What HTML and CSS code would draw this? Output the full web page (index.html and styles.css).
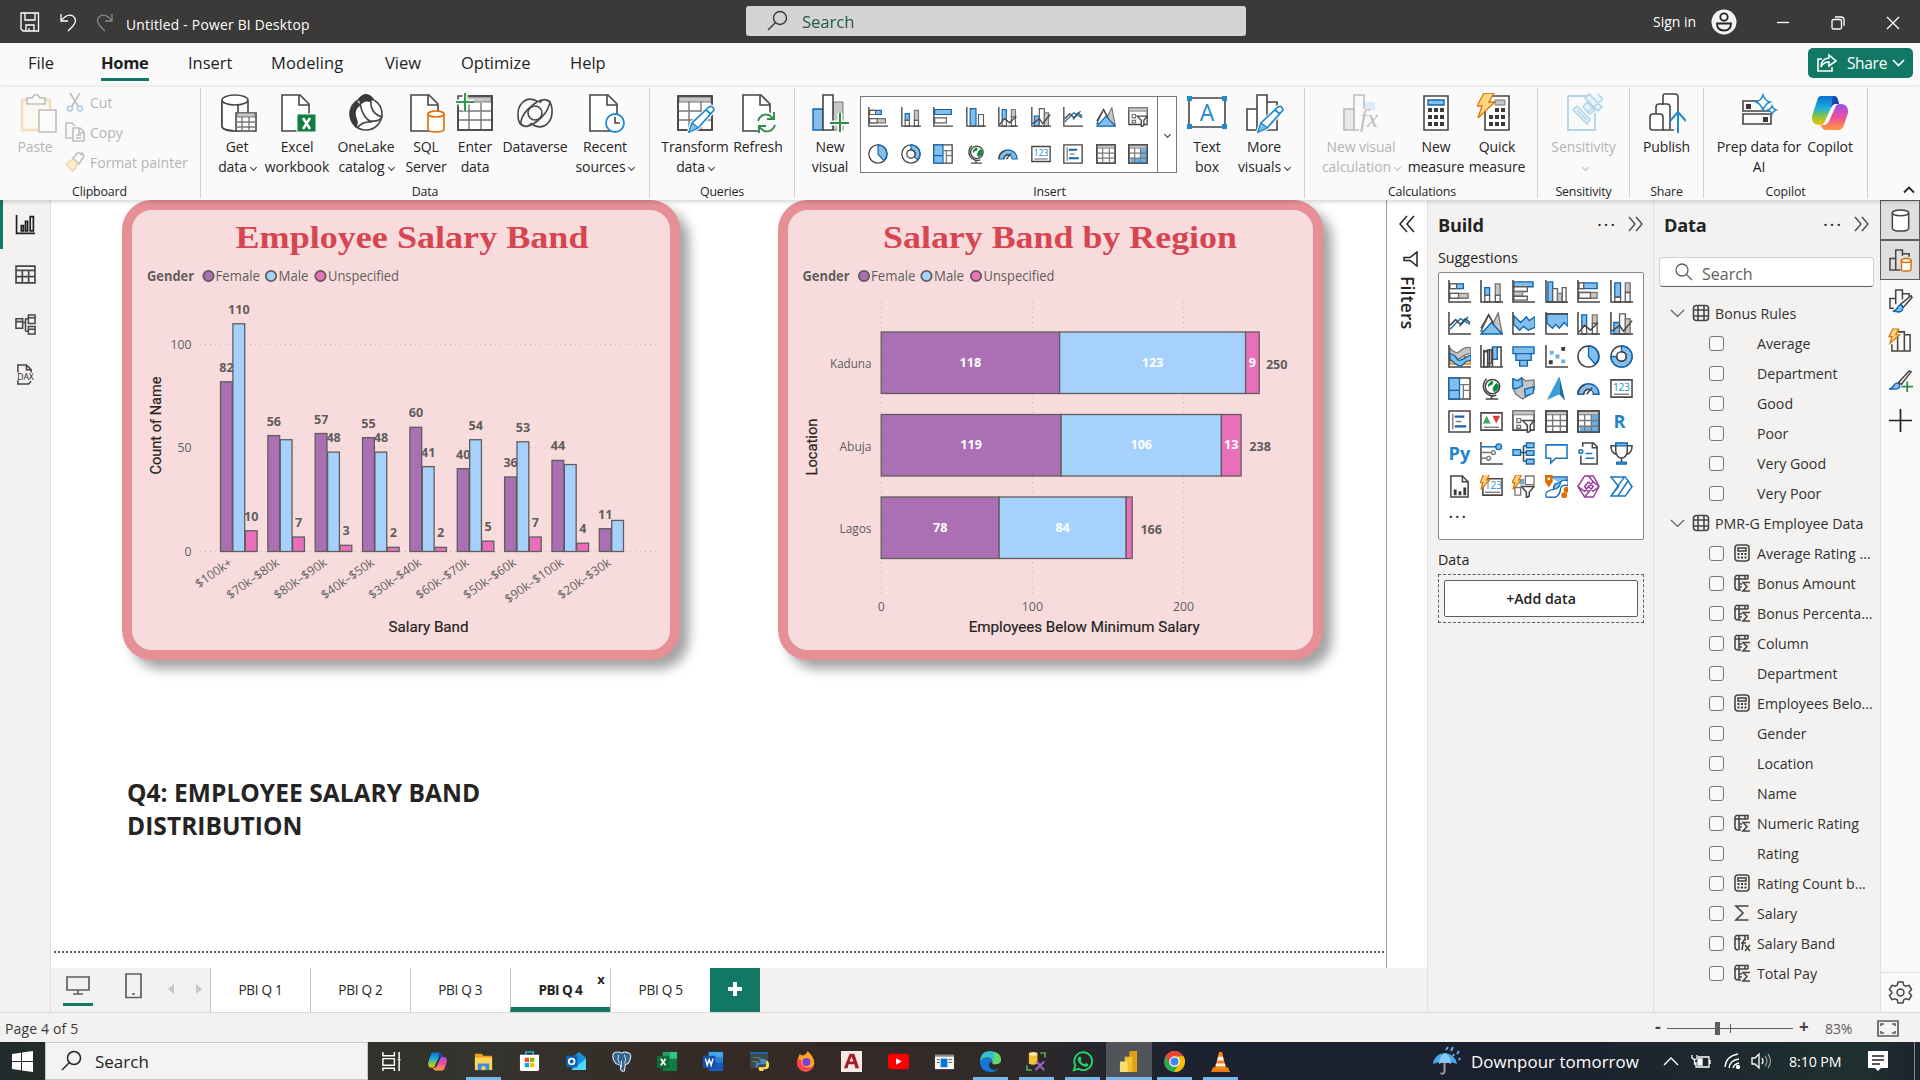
FILE: index.html
```html
<!DOCTYPE html>
<html lang="en">
<head>
<meta charset="utf-8">
<title>Untitled - Power BI Desktop</title>
<link rel="stylesheet" href="styles.css">
</head>
<body>
<svg class="sprite" width="0" height="0">
  <!-- visual types, 24 unit grid -->
  <symbol id="v-sbar" viewBox="0 0 24 24"><path class="u" d="M2 4h14v5H2z"/><path class="w" d="M2 4h7v5H2z"/><path class="g" d="M2 14h19v5H2z"/><path class="w" d="M2 14h9v5H2z"/><path class="k" d="M1 0v23h23"/></symbol>
  <symbol id="v-scol" viewBox="0 0 24 24"><path class="u" d="M5 8h5v8H5z"/><path class="w" d="M5 16h5v7H5z"/><path class="g" d="M16 4h5v12h-5z"/><path class="w" d="M16 16h5v7h-5z"/><path class="k" d="M1 0v23h23"/></symbol>
  <symbol id="v-cbar" viewBox="0 0 24 24"><path class="u" d="M2 2h20v5H2z"/><path class="w" d="M2 7h14v5H2z"/><path class="g" d="M2 12h9v5H2z"/><path class="w" d="M2 17h14v4H2z"/><path class="k" d="M1 0v23h23"/></symbol>
  <symbol id="v-cbar2" viewBox="0 0 24 24"><path class="u" d="M2 3h20v6H2z"/><path class="w" d="M2 13h14v6H2z"/><path class="k" d="M1 0v23h23"/></symbol>
  <symbol id="v-ccol2" viewBox="0 0 24 24"><path class="u" d="M5 2h7v21H5z"/><path class="w" d="M15 9h6v14h-6z"/><path class="k" d="M1 0v23h23"/></symbol>
  <symbol id="v-ccol" viewBox="0 0 24 24"><path class="u" d="M3 2h5v21H3z"/><path class="w" d="M8 9h5v14H8z"/><path class="g" d="M13 14h5v9h-5z"/><path class="w" d="M18 8h4v15h-4z"/><path class="k" d="M1 0v23h23"/></symbol>
  <symbol id="v-pbar" viewBox="0 0 24 24"><path class="u" d="M2 3h19v6H2z"/><path class="w" d="M2 3h5v6H2z"/><path class="g" d="M2 13h19v6H2z"/><path class="w" d="M2 13h12v6H2z"/><path class="k" d="M1 0v23h23"/></symbol>
  <symbol id="v-pcol" viewBox="0 0 24 24"><path class="u" d="M5 3h6v15H5z"/><path class="w" d="M5 18h6v5H5z"/><path class="g" d="M16 3h5v10h-5z"/><path class="w" d="M16 13h5v10h-5z"/><path class="k" d="M1 0v23h23"/></symbol>
  <symbol id="v-line" viewBox="0 0 24 24"><path class="bl" d="M2 18l11-11 10 6"/><path class="bl" d="M12 15l9-10"/><path class="k" d="M1 0v23h23M2 14l6-6 5 5 5-6 5 4"/></symbol>
  <symbol id="v-area" viewBox="0 0 24 24"><path class="g" d="M12 15l7-14 4 21z"/><path class="w" d="M1 20L9 3l9 17H1z"/><path class="u" d="M1 23l11-12 11 12z"/><path class="k" d="M1 17L9 3l5 9"/></symbol>
  <symbol id="v-sarea" viewBox="0 0 24 24"><path class="u" d="M2 4l7 7 6-6 3 4 6-4v11l-7 3-5-4-4 4-6-6z"/><path class="k" d="M1 0v23h23"/></symbol>
  <symbol id="v-parea" viewBox="0 0 24 24"><path class="u" d="M2 2h22v13l-4-4-5 6-4-4-3 4-6-5z"/><path class="k" d="M1 0v23h23M1 2h23"/></symbol>
  <symbol id="v-lscol" viewBox="0 0 24 24"><path class="u" d="M5 3h5v12H5z"/><path class="w" d="M5 15h5v8H5z"/><path class="g" d="M16 3h5v9h-5z"/><path class="w" d="M16 12h5v11h-5z"/><path class="k" d="M1 0v23h23M2 21l6-7 6 5 8-8"/></symbol>
  <symbol id="v-lccol" viewBox="0 0 24 24"><path class="u" d="M4 11h6v12H4z"/><path class="w" d="M10 2h6v21h-6z"/><path class="g" d="M16 7h5v16h-5z"/><path class="k" d="M1 0v23h23M2 20l8-6 4 6 9-11"/></symbol>
  <symbol id="v-ribbon" viewBox="0 0 24 24"><path class="g" d="M2 3q6 8 11 3t11-3v6q-6 0-10 4t-12-4z"/><path class="o" d="M2 12h6v8H2zM17 12h6v8h-6z"/><path class="u" d="M2 9q5 1 7 5t8 0 7-3v5q-5 0-8 4t-9-1-5-4z"/><path class="k" d="M1 0v23h23"/></symbol>
  <symbol id="v-fall" viewBox="0 0 24 24"><path class="w" d="M4 7h4v16H4zM8 5h4v14H8z"/><path class="u" d="M13 2h5v13h-5z"/><path class="k" d="M1 0v23h23M4 23V6h4v17M10 5v18M13 3v20M18 2h4v21"/></symbol>
  <symbol id="v-funnel" viewBox="0 0 24 24"><path class="u" d="M1 2h22v7H1zM4 9h16v7H4zM8 16h8v6H8z"/></symbol>
  <symbol id="v-scatter" viewBox="0 0 24 24"><path class="uf" d="M5 6h4v4H5zM11 10h4v4h-4zM17 15h4v4h-4z"/><path class="kf" d="M17 2h4v4h-4zM4 16h4v4H4z"/><path class="k" d="M1 0v23h23"/></symbol>
  <symbol id="v-pie" viewBox="0 0 24 24"><circle class="kw" cx="12" cy="12" r="11"/><path class="u" d="M12 1a11 11 0 0 1 7 19l-7-8z"/></symbol>
  <symbol id="v-donut" viewBox="0 0 24 24"><circle class="kw" cx="12" cy="12" r="11"/><path class="u" fill-rule="evenodd" d="M12 1a11 11 0 1 1-11 11h6a5 5 0 1 0 5-5z"/><circle class="k" cx="12" cy="12" r="5"/></symbol>
  <symbol id="v-donut2" viewBox="0 0 24 24"><circle class="kw" cx="12" cy="12" r="11"/><path class="u" d="M12 1a11 11 0 0 1 8 18l-4-4a5 5 0 0 0-4-8z"/><circle class="k" cx="12" cy="12" r="5"/></symbol>
  <symbol id="v-tree" viewBox="0 0 24 24"><path class="kw" d="M1 1h22v22H1z"/><path class="u" d="M1 1h11v13H1zM1 14h11v9H1z"/><path class="gl" d="M12 8h11M16 8v15M16 14h7"/></symbol>
  <symbol id="v-globe" viewBox="0 0 24 24"><circle class="kw" cx="13" cy="10" r="7.500"/><path d="M8 8l4-4 2 1-1 3-3 1-1 2zM14 10l3-4 3 3-1 4-4 3-2-3z" fill="#10893e"/><path class="k" d="M7 2a10 10 0 0 0 10 17M12 19v4M6 23h13"/></symbol>
  <symbol id="v-map" viewBox="0 0 24 24"><path class="g" d="M1 2l5 2 4-3 4 3 9-1v10l-4 5-8 5-7-5-3-7z"/><path class="u" d="M1 2l5 2 4-3 1 8-6 3H1zM13 13l10-3-1 7-8 3z"/></symbol>
  <symbol id="v-azure" viewBox="0 0 24 24"><path d="M15-1L2 24l13-6z" fill="#35a0d8"/><path d="M15-1l6 26-6-7z" fill="#1d6f9f"/></symbol>
  <symbol id="v-gauge" viewBox="0 0 24 24"><path class="u" d="M1 18a11 11 0 0 1 22 0h-6a5 5 0 0 0-10 0z"/><path class="k" d="M10 18l6-7M1 18a11 11 0 0 1 7-10M7 18a5 5 0 0 1 6-5"/></symbol>
  <symbol id="v-card" viewBox="0 0 24 24"><path class="kw" d="M1 3h22v18H1z"/><path class="gl" d="M4 18h16"/></symbol>
  <symbol id="v-multi" viewBox="0 0 24 24"><path class="kw" d="M1 1h22v22H1z"/><path class="gl" d="M5 4v16"/><path class="bl2" d="M7 7h10M7 17h12"/><path class="gl" d="M8 12h6"/></symbol>
  <symbol id="v-kpi" viewBox="0 0 24 24"><path class="kw" d="M1 3h22v18H1z"/><path d="M3 14l4-8 4 8z" fill="#3da45c"/><path d="M13 6h8l-4 8z" fill="#e03a3a"/><path class="gl" d="M4 18h16"/></symbol>
  <symbol id="v-slicer" viewBox="0 0 24 24"><path class="kw" d="M1 1h22v20H1z"/><path class="gf" d="M1 1h22v4H1z"/><path class="gl" d="M5 9h4v4H5zM5 16h4v3H5z"/><path class="kw" d="M11 11h12l-4 5v6l-3 2v-8z"/></symbol>
  <symbol id="v-table" viewBox="0 0 24 24"><path class="kw" d="M1 1h22v22H1z"/><path class="gf" d="M1 1h22v4H1z"/><path class="gl" d="M2 11h20M2 17h20M8 5v17M16 5v17"/><path class="k" d="M1 1h22v22H1z"/></symbol>
  <symbol id="v-matrix" viewBox="0 0 24 24"><path class="kw" d="M1 1h22v22H1z"/><path class="gf" d="M1 1h22v4H1z"/><path class="uf" d="M15 5h8v18H3v-6h12z"/><path class="gl" d="M2 11h20M2 17h20M8 5v17M15 5v17"/><path class="k" d="M1 1h22v22H1z"/></symbol>
  <symbol id="v-infl" viewBox="0 0 24 24"><path class="k" d="M1 0v23h23"/><path class="bl" d="M2 5h16"/><circle class="u" cx="19.500" cy="5" r="3"/><path class="gl" d="M2 11h10M2 17h5"/><circle class="gl" cx="14" cy="11" r="2"/><circle class="gl" cx="9" cy="17" r="2"/></symbol>
  <symbol id="v-decomp" viewBox="0 0 24 24"><path class="k" d="M9 11h6M12 4v16M12 4h3M12 20h3"/><path class="u" d="M1 8h8v6H1zM15 1h8v5h-8zM15 9h8v5h-8zM15 18h8v5h-8z"/></symbol>
  <symbol id="v-qa" viewBox="0 0 24 24"><path class="bl" d="M1 3h22v14H11l-5 5v-5H1z"/></symbol>
  <symbol id="v-narr" viewBox="0 0 24 24"><path class="k" d="M6 5V1h11l4 4v18H4v-9M16 1v5h5"/><circle class="bl" cx="4" cy="10" r="2"/><path class="bl" d="M9 12h7M9 17h9"/></symbol>
  <symbol id="v-goal" viewBox="0 0 24 24"><path class="kw" d="M6 2h12v8q-1 6-6 7-5-1-6-7zM6 4H1q0 8 6 9M18 4h5q0 8-6 9M12 17v4"/><path class="u" d="M6 1h12v3H6zM7 21h10v2H7z"/></symbol>
  <symbol id="v-pag" viewBox="0 0 24 24"><path class="kw" d="M3 1h12l6 6v16H3z"/><path class="k" d="M15 1v6h6"/><path class="kf" d="M6 15h3v6H6zM11 17h3v4h-3zM16 13h3v8h-3z"/></symbol>
  <symbol id="v-newcard" viewBox="0 0 24 24"><path class="kw" d="M3 4h20v17H3z"/><path class="gl" d="M5 18h16"/></symbol>
  <symbol id="v-bolt" viewBox="0 0 24 24"><path class="o" d="M4-1h6L7 5h3L1 15l2-7H0z"/></symbol>
  <symbol id="v-newslice" viewBox="0 0 24 24"><path class="gl" d="M14 1h9v9h-9zM3 13h6v8H3z"/><path class="uf" d="M8 4h5v6H8z"/><path class="kw" d="M10 12h13l-5 6v4l-3 2v-6z"/><path class="o" d="M4 0h6L7 5h3L1 15l2-7H0z"/></symbol>
  <symbol id="v-arc" viewBox="0 0 24 24"><path class="u" d="M4 2h19v9q-7-1-7 4t-5 8H2v-5q7 2 7-4t7-6"/><path d="M1 23h10q4-2 5-8t8-4V6q-7-2-8 3t-7 6-8 4z" fill="#fff" stroke="#0f66b0" stroke-width="1.200"/><path d="M0 0h8v7l-4 6-4-6zM24 13a3 3 0 1 0 0 5z" fill="#e06c00"/><circle cx="4" cy="4" r="1.500" fill="#fff"/><circle cx="20" cy="21" r="3" fill="#e06c00"/></symbol>
  <symbol id="v-apps" viewBox="0 0 24 24"><path d="M8 1h4l5 6-5 5-4 5-7-5zM12 1h5l6 11-6 11H8l4-5 5-6-5-5M1 12l7 11 4-5-4-6 4-5M17 7l6 5-6 5-5-5" fill="none" stroke="#9b3a9b" stroke-width="1.500" stroke-linejoin="round"/></symbol>
  <symbol id="v-auto" viewBox="0 0 24 24"><path class="bl" d="M1 2h15l7 10-7 10H1l8-10zM1 22l14-20M8 22L19 6"/></symbol>
  <!-- ribbon, 40 unit grid -->
  <symbol id="r-getdata" viewBox="0 0 40 40"><path class="kw" d="M5 8v25q0 5 13 5h3V8"/><path class="kw" d="M5 8v25q0 4 11 4.500M31 8v14"/><ellipse class="kw" cx="18" cy="7" rx="13" ry="5"/><path class="kw" d="M19 20h20v18H19z"/><path class="gf" d="M20 20h18v4H20z"/><path class="gl" d="M19 29h20M19 34h20M25 24v14M32 24v14"/></symbol>
  <symbol id="r-page" viewBox="0 0 40 40"><path class="kw" d="M5 2h18l9 9v27H5z"/><path class="k" d="M22 2v10h10"/></symbol>
  <symbol id="r-excel" viewBox="0 0 40 40"><use href="#r-page"/><path d="M20 21h19v18H20z" fill="#107c41" stroke="#fafafa"/><path d="M26 25l7 11M33 25l-7 11" stroke="#fff" stroke-width="2.500"/></symbol>
  <symbol id="r-lake" viewBox="0 0 40 40"><circle class="kw" cx="20" cy="21" r="16"/><path class="kf" d="M12 6q8-10 16 0l-4 3q-6-2-9 3zM11 8q-14 13-1 27 3-4 1-9-4-9 4-14z"/><path class="k" d="M14 11q3 15 12 18-9-1-15 6M25 8q-1 12 11 16-3 5-11 4"/></symbol>
  <symbol id="r-sql" viewBox="0 0 40 40"><use href="#r-page"/><path d="M22 21v15q0 3 8 3t8-3V21z" fill="#fff" stroke="#e06c00" stroke-width="1.600"/><ellipse cx="30" cy="21" rx="8" ry="3" fill="#fff" stroke="#e06c00" stroke-width="1.600"/></symbol>
  <symbol id="r-enter" viewBox="0 0 40 40"><path class="kw" d="M3 3h34v34H3z"/><path class="gf" d="M11 4h25v5H11z"/><path class="gl" d="M3 18h34M3 27h34M14 10v27M26 10v27"/><path class="k" d="M3 14v23h34V3H14"/><path d="M2 9h17M10 0v18" stroke="#fafafa" stroke-width="5"/><path d="M1 9h18M10 0v18" stroke="#2e9e48" stroke-width="2"/></symbol>
  <symbol id="r-dv" viewBox="0 0 40 40"><path class="k" d="M22 8C10 2 2 12 3 24s10 10 15 7 13-10 15-16 4-6-1-8-7 3-7 3M18 32c12 6 20-4 19-16S27 6 22 9 9 19 7 25s-2 6 2 8 7-2 8-3"/><circle class="k" cx="20" cy="20" r="7"/></symbol>
  <symbol id="r-recent" viewBox="0 0 40 40"><use href="#r-page"/><circle cx="30" cy="30" r="9" fill="#fff" stroke="#1e8bcd" stroke-width="1.800"/><path class="k" d="M30 24v6h5"/></symbol>
  <symbol id="r-transform" viewBox="0 0 40 40"><path class="kw" d="M3 3h34v34H3z"/><path class="gf" d="M4 4h32v5H4z"/><path class="gl" d="M3 18h34M3 27h34M14 8v29M26 8v29"/><path class="k" d="M3 3h34v34H3z"/><use href="#r-pencil"/></symbol>
  <symbol id="r-pencil" viewBox="0 0 40 40"><path d="M14 39l3-9 17-16q4-2 5 3L23 35z" fill="#fff" stroke="#fafafa" stroke-width="4"/><path d="M14 39l3-9 17-16q4-2 5 3L23 35zM17 30l6 5M31 17l5 4" fill="#fff" stroke="#1e8bcd" stroke-width="1.700"/><path d="M14 39l3-9 6 5z" fill="#83beec" stroke="#1e8bcd"/></symbol>
  <symbol id="r-refresh" viewBox="0 0 40 40"><use href="#r-page"/><circle cx="28" cy="30" r="11" fill="#fafafa"/><path d="M20 28q3-8 11-6l5 4M36 19v7h-7M37 32q-3 8-11 6l-5-4M21 40v-7h7" fill="none" stroke="#2e8b48" stroke-width="1.900"/></symbol>
  <symbol id="r-newvis" viewBox="0 0 40 40"><path class="gf" d="M23 9h10v28H23z"/><path class="u" d="M3 16h10v21H3z"/><path class="kw" d="M13 2h10v35H13z"/><path d="M20 30h19M30 20v19" stroke="#fafafa" stroke-width="5"/><path d="M20 30h19M30 20v19" stroke="#2e8b48" stroke-width="2"/></symbol>
  <symbol id="r-text" viewBox="0 0 40 40"><path class="kw" d="M2 5h36v29H2z"/><path d="M0 3h5v5H0zM35 3h5v5h-5zM0 31h5v5H0zM35 31h5v5h-5z" fill="#1e8bcd"/></symbol>
  <symbol id="r-more" viewBox="0 0 40 40"><path class="kw" d="M3 16h10v21H3zM13 2h10v35H13zM23 9h10v28H23z"/><use href="#r-pencil"/></symbol>
  <symbol id="r-calc" viewBox="0 0 40 40"><path class="gf" d="M3 16h10v21H3z"/><path class="k" d="M3 16h10v21H3zM13 37V2h10v14M13 37h5"/><path d="M24 9h10v8H24z" fill="#9ccbf0"/></symbol>
  <symbol id="r-measure" viewBox="0 0 40 40"><path class="kw" stroke-width="2" d="M8 3h24v34H8z"/><path class="u" d="M12 7h16v5H12z"/><path class="kf" d="M12 15h4v4h-4zM18 15h4v4h-4zM24 15h4v4h-4zM12 22h4v4h-4zM18 22h4v4h-4zM24 22h4v4h-4zM12 29h4v4h-4zM18 29h4v4h-4zM24 29h4v4h-4z"/></symbol>
  <symbol id="r-quick" viewBox="0 0 40 40"><path class="kw" d="M8 3h24v34H8z"/><path class="gf" d="M18 7h10v5H18z"/><path class="kf" d="M12 22h4v4h-4zM18 15h4v4h-4zM24 15h4v4h-4zM18 22h4v4h-4zM24 22h4v4h-4zM12 29h4v4h-4zM18 29h4v4h-4zM24 29h4v4h-4z"/><path class="o" d="M7 0h10l-5 9h6L1 25l4-12H0z"/></symbol>
  <symbol id="r-sens" viewBox="0 0 40 40"><path d="M5 3h22M32 20v17H5V3" fill="none" stroke="#1e8bcd" stroke-width="1.800"/><path d="M10 17l4-4 13 13-3 5zM14 17l10 10M22 5l4-4 13 13-4 4zM20 14l4-5 8 8-5 4zM35 1l5 5-16 14" fill="#c5e3f7" stroke="#1e8bcd" stroke-width="1.500"/></symbol>
  <symbol id="r-publish" viewBox="0 0 40 40"><path class="kw" d="M17 12V3q0-2 2-2h10q3 0 3 3v12M10 21v-7q0-3 3-3h8q3 0 3 3v22M4 36V24q0-3 3-3h7q3 0 3 3v13H6q-2 0-2-3"/><path class="k" d="M17 37h11M32 16v5"/><path d="M32 40V19M24 28l8-9 8 9" fill="none" stroke="#1e8bcd" stroke-width="2"/></symbol>
  <symbol id="r-prep" viewBox="0 0 40 40"><path class="k" d="M19 8H4v10h28M4 21h28v10H4z"/><path class="kf" d="M7 11h5v5H7zM24 24h5v5h-5z"/><path d="M24 2q2 6 7 7-5 2-7 8-2-6-7-8 5-1 7-7zM33 13q1 3 4 4-3 1-4 4-1-3-4-4 3-1 4-4z" fill="#fff" stroke="#1e8bcd" stroke-width="1.500"/></symbol>
  <linearGradient id="cg1" x1="0" y1="0" x2="0" y2="1"><stop offset="0" stop-color="#0a6fd6"/><stop offset=".45" stop-color="#22b1d8"/><stop offset=".7" stop-color="#8bc43f"/><stop offset="1" stop-color="#f4c000"/></linearGradient>
  <linearGradient id="cg2" x1="0" y1="0" x2="0" y2="1"><stop offset="0" stop-color="#9a4df0"/><stop offset=".5" stop-color="#ea4f9d"/><stop offset="1" stop-color="#ff9a3c"/></linearGradient>
  <symbol id="r-copilot" viewBox="0 0 40 40"><path d="M11 3h13q3 0 4 4l1 4h-4q-3 0-5 6l-5 11q-1 4-5 4-9 0-8-9L7 8q1-5 4-5z" fill="url(#cg1)"/><path d="M29 37H16q-4 0-5-5h4q3-1 5-6l5-11q1-4 5-4 9 0 8 9l-4 12q-2 5-5 5z" fill="url(#cg2)"/><path d="M23 3q4 0 5 4l1 4h-4q-2 0-4 4z" fill="#1847b5"/></symbol>
  <symbol id="r-paste" viewBox="0 0 40 40"><path d="M4 7h28v30H4z" fill="#fff4dd" stroke="#e8a33d" stroke-width="2.500"/><path class="kw" d="M9 11V5h5q4-7 8 0h5v6z"/><path class="kw" stroke-width="2" d="M21 17h17v22H21z"/></symbol>
  <symbol id="s-cut" viewBox="0 0 20 20"><path class="k" d="M5 1l8 13M15 1L7 14"/><circle class="bl" cx="5" cy="16.500" r="2.500"/><circle class="bl" cx="15" cy="16.500" r="2.500"/></symbol>
  <symbol id="s-copy" viewBox="0 0 20 20"><path class="k" d="M7 16H1V1h6l3 3"/><path class="kw" d="M8 6h7l4 4v9H8zM14 6v5h5M11 13h5M11 16h5"/></symbol>
  <symbol id="s-brush" viewBox="0 0 20 20"><path class="kw" d="M8 6l6 6 5-8-2-3-2 1-2-2-3 4z"/><path class="o" d="M8 7L1 12l7 7 5-7z"/></symbol>
  <!-- field list -->
  <symbol id="f-table" viewBox="0 0 18 18"><rect class="k" x="1.500" y="1.500" width="15" height="15" rx="3"/><path class="k" d="M6 2v14M12 2v14M2 6h14M2 12h14"/></symbol>
  <symbol id="f-calc" viewBox="0 0 18 18"><rect class="k" x="2" y="1" width="14" height="16" rx="3"/><rect class="k" x="5" y="4" width="8" height="3"/><path class="kf" d="M4.500 9h2v2h-2zM8 9h2v2H8zM11.500 9h2v2h-2zM4.500 12.500h2v2h-2zM8 12.500h2v2H8zM11.500 12.500h2v2h-2z"/></symbol>
  <symbol id="f-colsum" viewBox="0 0 18 18"><path class="k" d="M15 5V1.500H3.500Q2 2 2 4v9q0 3 3 3h3M6 2v14M12 2v3M2 5h13M6 10h3M6 13h3M17 8.500h-7l4 4-4 4.500h7"/></symbol>
  <symbol id="f-sum" viewBox="0 0 18 18"><path class="k" d="M15.500 2H3l7 7-7 7h12.500"/></symbol>
  <symbol id="f-fx" viewBox="0 0 18 18"><path class="k" d="M15 6V1.500H3.500Q2 2 2 4v9q0 3 3 3M6 2v14M12 2v3M2 5h6M13 6q-3-1-3 4l-1 6M8 9h5M12 11l5 6M17 11l-5 6"/></symbol>
</svg>

<header class="titlebar">
  <svg class="qa" viewBox="0 0 20 20"><path d="M1 1h17.500v18H3l-2-2zM5 1v7h10V1M6 19v-6h8v6M9 16v3"/></svg>
  <svg class="qa undo" viewBox="0 0 18 20"><path d="M2 2v7h7M2 9q6-8 12-5 5 4 0 10l-5 5"/></svg>
  <svg class="qa redo" viewBox="0 0 18 20"><path d="M16 2v7H9M16 9q-6-8-12-5-5 4 0 10l5 5"/></svg>
  <span class="wintitle">Untitled - Power BI Desktop</span>
  <div class="topsearch"><svg width="22" height="22" viewBox="0 0 22 22"><circle cx="14" cy="8" r="6.500"/><path d="M9.500 12.500L2 20"/></svg>Search</div>
  <span class="signin">Sign in</span>
  <svg class="avatar" viewBox="0 0 26 26"><circle cx="13" cy="13" r="12.500" fill="#f3f2f1"/><g fill="none" stroke="#252423" stroke-width="1.800"><circle cx="13" cy="8" r="3.700"/><path d="M6 14.500h14q0 7-7 7t-7-7z"/></g></svg>
  <svg class="win" width="14" height="14" viewBox="0 0 14 14"><path d="M1 6.500h12"/></svg>
  <svg class="win" width="14" height="14" viewBox="0 0 14 14"><rect x="1" y="3.500" width="9.500" height="9.500" rx="1.500"/><path d="M4 1h6q3 0 3 3v6"/></svg>
  <svg class="win" width="14" height="14" viewBox="0 0 14 14"><path d="M1 1l12 12M13 1L1 13"/></svg>
</header>

<nav class="menu">
  <span class="m1">File</span><b class="m2">Home</b><span class="m3">Insert</span><span class="m4">Modeling</span><span class="m5">View</span><span class="m6">Optimize</span><span class="m7">Help</span>
  <button class="share"><svg width="22" height="20" viewBox="0 0 22 20"><path d="M6 6H2v12h14v-4M13 2l7 6-7 5v-4q-6 0-8 5 0-8 8-9z"/></svg>Share<svg width="13" height="8" viewBox="0 0 13 8"><path d="M1 1l5.500 5.500L12 1"/></svg></button>
</nav>

<section class="ribbon">
  <div class="group g-clip"><div class="tools">
    <div class="rb w-paste off"><svg><use href="#r-paste"/></svg><span>Paste</span></div>
    <div class="small off"><div><svg><use href="#s-cut"/></svg>Cut</div><div><svg><use href="#s-copy"/></svg>Copy</div><div><svg><use href="#s-brush"/></svg>Format painter</div></div>
  </div><footer>Clipboard</footer></div>
  <div class="group g-data"><div class="tools">
    <div class="rb w66"><svg><use href="#r-getdata"/></svg><span>Get</span><span>data<i></i></span></div>
    <div class="rb w54"><svg><use href="#r-excel"/></svg><span>Excel</span><span>workbook</span></div>
    <div class="rb w84"><svg><use href="#r-lake"/></svg><span>OneLake</span><span>catalog<i></i></span></div>
    <div class="rb w36"><svg><use href="#r-sql"/></svg><span>SQL</span><span>Server</span></div>
    <div class="rb w62"><svg><use href="#r-enter"/></svg><span>Enter</span><span>data</span></div>
    <div class="rb w58"><svg><use href="#r-dv"/></svg><span>Dataverse</span></div>
    <div class="rb w82"><svg><use href="#r-recent"/></svg><span>Recent</span><span>sources<i></i></span></div>
  </div><footer>Data</footer></div>
  <div class="group g-query"><div class="tools">
    <div class="rb w66"><svg><use href="#r-transform"/></svg><span>Transform</span><span>data<i></i></span></div>
    <div class="rb w60"><svg><use href="#r-refresh"/></svg><span>Refresh</span></div>
  </div><footer>Queries</footer></div>
  <div class="group g-insert"><div class="tools">
    <div class="rb w59"><svg><use href="#r-newvis"/></svg><span>New</span><span>visual</span></div>
    <div class="gallery"><div class="gal-grid">
      <svg><use href="#v-sbar"/></svg><svg><use href="#v-scol"/></svg><svg><use href="#v-cbar2"/></svg><svg><use href="#v-ccol2"/></svg><svg><use href="#v-lscol"/></svg><svg><use href="#v-lccol"/></svg><svg><use href="#v-line"/></svg><svg><use href="#v-area"/></svg><svg><use href="#v-slicer"/></svg>
      <svg><use href="#v-pie"/></svg><svg><use href="#v-donut2"/></svg><svg><use href="#v-tree"/></svg><svg><use href="#v-globe"/></svg><svg><use href="#v-gauge"/></svg><svg viewBox="0 0 24 24"><use href="#v-card"/><text x="12" y="14.500" class="t123">123</text></svg><svg><use href="#v-multi"/></svg><svg><use href="#v-table"/></svg><svg><use href="#v-matrix"/></svg>
    </div><div class="gal-more"><i></i></div></div>
    <div class="rb w60"><svg viewBox="0 0 40 40"><use href="#r-text"/><text x="20" y="28" class="ta">A</text></svg><span>Text</span><span>box</span></div>
    <div class="rb w54"><svg><use href="#r-more"/></svg><span>More</span><span>visuals<i></i></span></div>
  </div><footer>Insert</footer></div>
  <div class="group g-calc"><div class="tools">
    <div class="rb w108 off"><svg viewBox="0 0 40 40"><use href="#r-calc"/><text x="28" y="34" class="tfx">fx</text></svg><span>New visual</span><span>calculation<i></i></span></div>
    <div class="rb w42"><svg><use href="#r-measure"/></svg><span>New</span><span>measure</span></div>
    <div class="rb w80"><svg><use href="#r-quick"/></svg><span>Quick</span><span>measure</span></div>
  </div><footer>Calculations</footer></div>
  <div class="group g-sens"><div class="tools mid"><div class="rb off"><svg><use href="#r-sens"/></svg><span>Sensitivity</span><span><i></i></span></div></div><footer>Sensitivity</footer></div>
  <div class="group g-share"><div class="tools mid"><div class="rb"><svg><use href="#r-publish"/></svg><span>Publish</span></div></div><footer>Share</footer></div>
  <div class="group g-cop"><div class="tools">
    <div class="rb w110"><svg><use href="#r-prep"/></svg><span>Prep data for</span><span>AI</span></div>
    <div class="rb w32"><svg><use href="#r-copilot"/></svg><span>Copilot</span></div>
  </div><footer>Copilot</footer></div>
  <svg class="collapse" width="12" height="8" viewBox="0 0 12 8"><path d="M1 6.500L6 1.500l5 5"/></svg>
</section>

<main class="work">
  <aside class="leftrail">
    <div class="on"><svg viewBox="0 0 20 20"><path class="k2" d="M1.500 1v17.500H19M6 16v-5h2v5zM10 16V7h2v9zM14.500 16V2.500h3V16z"/></svg></div>
    <div><svg viewBox="0 0 20 20"><path class="k" d="M1 2h18v16H1zM1 6h18M1 12h18M7 6v12M13 6v12"/></svg></div>
    <div><svg viewBox="0 0 22 22"><path class="k" d="M1 5h7v10H1zM1 8h7M14 1h7v9h-7zM14 4h7M14 13h7v8h-7zM14 16h7M8 9h3M11 5v13M11 5h3M11 18h3"/></svg></div>
    <div><svg viewBox="0 0 22 22"><path class="k" d="M3 9V1h9l5 5v3M12 1v5h5M3 17v4h11l3-3"/><text x="11" y="16.500" class="tdax">DAX</text></svg></div>
  </aside>
  <div class="center">
    <div class="stage">
      <div class="canvas">
        <div class="cards">
          <article class="card c1"><svg id="bands"></svg></article>
          <article class="card c2"><svg id="regions"></svg></article>
        </div>
        <h1>Q4: EMPLOYEE SALARY BAND<br>DISTRIBUTION</h1>
        <div class="dots"></div>
      </div>
      <div class="filters">
        <svg width="18" height="18" viewBox="0 0 18 18"><path d="M9 1L2 9l7 8M16 1L9 9l7 8"/></svg>
        <svg width="16" height="16" viewBox="0 0 16 16"><path d="M15 1v14l-7-5.500H2v-3h6z"/></svg>
        <b>Filters</b>
      </div>
    </div>
    <div class="pages">
      <div class="view sel"><svg width="24" height="19" viewBox="0 0 24 19"><path d="M1 1h22v13H1zM12 14v4M7 18h10"/></svg></div>
      <div class="view ph"><svg width="17" height="26" viewBox="0 0 17 26"><path d="M1 1h15v23.500H1zM7 21h3"/></svg></div>
      <span class="ar l"></span><span class="ar r"></span>
      <div class="tab">PBI Q 1</div><div class="tab">PBI Q 2</div><div class="tab">PBI Q 3</div><div class="tab cur">PBI Q 4<em>x</em></div><div class="tab">PBI Q 5</div><div class="add"><svg width="14" height="14" viewBox="0 0 14 14"><path d="M7 0v14M0 7h14"/></svg></div>
    </div>
  </div>
  <aside class="pane build">
    <div class="phead"><b>Build</b><span class="dd">···</span><svg width="15" height="16" viewBox="0 0 15 16"><path d="M1 1l6 7-6 7M8 1l6 7-6 7"/></svg></div>
    <p class="lab">Suggestions</p>
    <div class="vis">
      <svg><use href="#v-sbar"/></svg><svg><use href="#v-scol"/></svg><svg><use href="#v-cbar"/></svg><svg><use href="#v-ccol"/></svg><svg><use href="#v-pbar"/></svg><svg><use href="#v-pcol"/></svg>
      <svg><use href="#v-line"/></svg><svg><use href="#v-area"/></svg><svg><use href="#v-sarea"/></svg><svg><use href="#v-parea"/></svg><svg><use href="#v-lscol"/></svg><svg><use href="#v-lccol"/></svg>
      <svg><use href="#v-ribbon"/></svg><svg><use href="#v-fall"/></svg><svg><use href="#v-funnel"/></svg><svg><use href="#v-scatter"/></svg><svg><use href="#v-pie"/></svg><svg><use href="#v-donut"/></svg>
      <svg><use href="#v-tree"/></svg><svg><use href="#v-globe"/></svg><svg><use href="#v-map"/></svg><svg><use href="#v-azure"/></svg><svg><use href="#v-gauge"/></svg><svg viewBox="0 0 24 24"><use href="#v-card"/><text x="12" y="14.500" class="t123">123</text></svg>
      <svg><use href="#v-multi"/></svg><svg><use href="#v-kpi"/></svg><svg><use href="#v-slicer"/></svg><svg><use href="#v-table"/></svg><svg><use href="#v-matrix"/></svg><svg viewBox="0 0 24 24"><text x="10" y="19" class="tbig">R</text></svg>
      <svg viewBox="0 0 24 24"><text x="12" y="19" class="tbig">Py</text></svg><svg><use href="#v-infl"/></svg><svg><use href="#v-decomp"/></svg><svg><use href="#v-qa"/></svg><svg><use href="#v-narr"/></svg><svg><use href="#v-goal"/></svg>
      <svg><use href="#v-pag"/></svg><svg viewBox="0 0 24 24"><use href="#v-newcard"/><text x="14" y="15" class="t123">123</text><use href="#v-bolt"/></svg><svg><use href="#v-newslice"/></svg><svg><use href="#v-arc"/></svg><svg><use href="#v-apps"/></svg><svg><use href="#v-auto"/></svg>
      <span class="dd">···</span>
    </div>
    <p class="lab lab2">Data</p>
    <div class="well"><div>+Add data</div></div>
  </aside>
  <aside class="pane data">
    <div class="phead"><b>Data</b><span class="dd">···</span><svg width="15" height="16" viewBox="0 0 15 16"><path d="M1 1l6 7-6 7M8 1l6 7-6 7"/></svg></div>
    <div class="fsearch"><svg width="18" height="18" viewBox="0 0 18 18"><circle cx="7" cy="7" r="6"/><path d="M11.500 11.500L17 17"/></svg><span>Search</span></div>
    <div id="fields" class="fields"></div>
  </aside>
  <aside class="rightrail">
    <div class="sel"><svg viewBox="0 0 24 24"><path class="kw" d="M3.500 4v16q0 3 8.500 3t8.500-3V4"/><ellipse class="kw" cx="12" cy="4" rx="8.500" ry="3"/></svg></div>
    <div class="sel"><svg viewBox="0 0 24 24"><path class="k" d="M1 10h6v12H1zM7 22V1h7v6M14 5h7v3M7 22h5"/><path d="M13 12v9q0 2 5 2t5-2v-9z" fill="#fff" stroke="#e06c00" stroke-width="1.500"/><ellipse cx="18" cy="12" rx="5" ry="2" fill="#fff" stroke="#e06c00" stroke-width="1.500"/></svg></div>
    <div><svg viewBox="0 0 24 24"><path class="k" d="M5 20H1V10h6v6M7 16V1h7v10M14 5h7v3"/><path class="kw" d="M12 16l11-9 1 2-9 10z"/><path class="u" d="M4 23q4-1 5-4 2-4 5-1 2 5-4 6z"/></svg></div>
    <div><svg viewBox="0 0 24 24"><path class="k" d="M3 16v7h19V6h-6M9 23V7M9 3h7v20"/><path class="o" d="M4 0h6L7 6h4L1 15l2-7H0z"/></svg></div>
    <div><svg viewBox="0 0 24 24"><path class="kw" d="M10 14L21 2l2 1-10 13z"/><path class="u" d="M0 21q4-1 5-4 3-4 6-1 1 5-4 5z"/><path d="M19 13v11M13 18.500h12" stroke="#2e8b48" stroke-width="1.800"/></svg></div>
    <div><svg viewBox="0 0 24 24"><path d="M12 0v24M0 12h24" stroke="#201f1e" stroke-width="1.800"/></svg></div>
    <div class="gear"><svg viewBox="0 0 24 24"><path class="k" d="M9.500 1h5l1 3.500 2 1 3.500-1 2.500 4.500-2.500 2.500v1l2.500 2.500-2.500 4.500-3.500-1-2 1-1 3.500h-5l-1-3.500-2-1-3.500 1L.5 15 3 12.500v-1L.5 9 3 4.500l3.500 1 2-1z"/><circle class="k" cx="12" cy="12" r="3.600"/></svg></div>
  </aside>
</main>

<div class="status"><span class="pg">Page 4 of 5</span>
  <b class="minus">-</b><svg class="slider" width="126" height="16" viewBox="0 0 126 16"><path d="M0 8.500h126M63.500 4v9" stroke="#605e5c"/><path d="M48 2h5v13h-5z" fill="#605e5c"/></svg><b class="plus">+</b><span class="pct">83%</span>
  <svg class="fit" width="22" height="17" viewBox="0 0 22 17"><path d="M1 1h20v15H1z"/><path d="M4 6V4h3M15 4h3v2M18 11v2h-3M7 13H4v-2"/></svg>
</div>

<footer class="taskbar">
  <div class="start"><svg width="21" height="21" viewBox="0 0 21 21"><path d="M0 3l9-1.300V10H0zM10 1.500L21 0v10H10zM0 11h9v8.300L0 18zM10 11h11v10l-11-1.500z" fill="#fff"/></svg></div>
  <div class="tsearch"><svg width="22" height="22" viewBox="0 0 22 22"><circle cx="14" cy="8" r="6.500"/><path d="M9.500 12.500L2 20"/></svg>Search</div>
  <div class="apps">
    <div><svg viewBox="0 0 22 22"><path d="M2 1v4h12V1M2 8h12v7H2zM2 21v-3h12v3M19 1v20M17.500 9h3" fill="none" stroke="#fff" stroke-width="1.500"/></svg></div>
    <div><svg viewBox="0 0 40 40"><use href="#r-copilot"/></svg></div>
    <div class="run"><svg viewBox="0 0 22 22"><path d="M2 3h7l2 2h9v15H2z" fill="#e8a41c"/><path d="M2 7h18v13H2z" fill="#ffd45e"/><path d="M5 20v-7h12v7h-4v-4H9v4z" fill="#3a8fdd"/></svg></div>
    <div><svg viewBox="0 0 22 22"><path d="M7 5V1h8v4" fill="none" stroke="#27b2e8" stroke-width="1.500"/><path d="M1 4h20v15q0 2-2 2H3q-2 0-2-2z" fill="#fff"/><path d="M6 7h4.500v4.500H6z" fill="#f25022"/><path d="M11.500 7H16v4.500h-4.500z" fill="#7fba00"/><path d="M6 12.500h4.500V17H6z" fill="#00a4ef"/><path d="M11.500 12.500H16V17h-4.500z" fill="#ffb900"/></svg></div>
    <div><svg viewBox="0 0 22 22"><path d="M7 7l8-6 7 6v13H7z" fill="#1490df"/><path d="M7 20l15-12v12z" fill="#50d9ff"/><path d="M1 5h12v12H1z" fill="#0f5fb5"/><circle cx="7" cy="11" r="3" fill="none" stroke="#fff" stroke-width="1.800"/></svg></div>
    <div><svg viewBox="0 0 22 22"><path d="M3 2q4-2 8 0 5-2 9 1 2 4-2 10l-3 1-1 7q-3 1-4-2v-4l-5-2Q0 7 3 2z" fill="#32648d" stroke="#d5e1ec" stroke-width="1.200"/><path d="M8 4q-2 5 1 9M14 4q3 5 0 9M11 10v7" fill="none" stroke="#d5e1ec"/></svg></div>
    <div><svg viewBox="0 0 22 22"><path d="M6 1h15v20H6z" fill="#107c41"/><path d="M13 1h8v7h-8z" fill="#33c481"/><path d="M6 1h7v7H6z" fill="#21a366"/><path d="M0 5h13v13H0z" fill="#0e6b37"/><path d="M4 8l5 7M9 8l-5 7" stroke="#fff" stroke-width="1.800"/></svg></div>
    <div><svg viewBox="0 0 22 22"><path d="M6 1h15v20H6z" fill="#185abd"/><path d="M6 1h15v6H6z" fill="#41a5ee"/><path d="M6 7h15v5H6z" fill="#2b7cd3"/><path d="M0 5h13v13H0z" fill="#1550a8"/><path d="M2.500 8L4.500 15l2-6 2 6 2-7" fill="none" stroke="#fff" stroke-width="1.500"/></svg></div>
    <div><svg viewBox="0 0 22 22"><path d="M1 1h19v17H1z" fill="#3d474e"/><path d="M1 1h19v2H1z" fill="#1e6aad"/><path d="M4 7h8M3 11h6" stroke="#4d9c62"/><path d="M10 8h5q3 0 3 3v3h-6q-3 0-3 3H7v-5h6z" fill="#4b8bbe"/><path d="M18 10q3 0 3 5t-6 4v2h-3q-2 0-2-4h6q2 0 2-3z" fill="#ffe052"/></svg></div>
    <div><svg viewBox="0 0 22 22"><circle cx="11" cy="12.500" r="9" fill="#ff6a2b"/><path d="M3 8l2-5 3 3q4-2 5-6 8 7 7 14-4 9-10 7z" fill="#ffa51e"/><path d="M3 8q-3 8 5 12 9 3 12-5-5 4-9 2-6-3-4-7z" fill="#ff3c5a"/><circle cx="12" cy="11.500" r="4.200" fill="#7a3fe0"/></svg></div>
    <div><svg viewBox="0 0 22 22"><path d="M0 0h22v22H0z" fill="#f7e9e6"/><path d="M3 18L9 3h5l5 15h-4l-1-4H8l-1 4z" fill="#a51f2b"/><path d="M9 11l2-5 2 5z" fill="#f7e9e6"/></svg></div>
    <div><svg viewBox="0 0 22 22"><rect y="3" width="22" height="16" rx="3" fill="#f00"/><path d="M8.500 7.500l6 3.500-6 3.500z" fill="#fff"/></svg></div>
    <div><svg viewBox="0 0 22 22"><path d="M1 4h20v15H1z" fill="#f3f3f3"/><path d="M1 4h20v2H1z" fill="#8a8a8a"/><path d="M7 8h7v9H7z" fill="#0078d7"/><path d="M3 9h3M3 12h3M15 9h4M15 12h4" stroke="#666"/></svg></div>
    <div class="run"><svg viewBox="0 0 22 22"><path d="M0 12Q0 0 11 0q11 1 11 9 0 5-6 5-4 0-3-3-1-5-7-4-5 1-6 5z" fill="#35c1c9"/><path d="M15 1q7 3 7 8 0 5-6 5-4 0-2-3z" fill="#63d865"/><path d="M0 12q1-5 7-5 6 0 6 4-5 1-3 6 4 5 10 1-4 5-10 4Q0 21 0 12z" fill="#1478d4"/></svg></div>
    <div class="run"><svg viewBox="0 0 22 22"><path d="M3 3v10q4 3 9 0V3z" fill="#f2c230"/><ellipse cx="7.500" cy="3" rx="4.500" ry="2" fill="#ffe79a"/><path d="M15 2h5v5M1 15v5h5" fill="none" stroke="#4fae5a" stroke-width="1.600"/><path d="M10 20l9-9M11 11l8 9" stroke="#9c63c4" stroke-width="2.200"/></svg></div>
    <div class="run"><svg viewBox="0 0 22 22"><path d="M2 20l1.500-5a9.300 9.300 0 1 1 3.500 3.700z" fill="none" stroke="#25d366" stroke-width="2"/><path d="M7 6l2 0 1 3-1 1q1 3 4 4l1.500-1.500 2.500 1q0 3-3 3Q7 15 6 9q0-2 1-3z" fill="#25d366"/></svg></div>
    <div class="run act"><svg viewBox="0 0 22 22"><path d="M12 0h8v22h-8z" fill="#e0a010"/><path d="M7 6h8v16H7z" fill="#f0c030"/><path d="M2 11h8v11H2z" fill="#f8dd70"/></svg></div>
    <div class="run"><svg viewBox="0 0 22 22"><circle cx="11" cy="11" r="11" fill="#34a853"/><path d="M1.500 5.500a11 11 0 0 1 19 0H11l-4.800 8z" fill="#ea4335"/><path d="M20.500 5.500A11 11 0 0 1 10.500 22l5-8-2-8.500z" fill="#fbbc05"/><circle cx="11" cy="11" r="5.500" fill="#fff"/><circle cx="11" cy="11" r="4.200" fill="#4285f4"/></svg></div>
    <div class="run"><svg viewBox="0 0 22 22"><path d="M3 17h16l2 5H1z" fill="#e87a10"/><path d="M9.500 1h3L17 19H5z" fill="#f58a1c"/><path d="M8.500 6h5l1 4h-7zM6.500 13h9l1 3h-11z" fill="#f2f2f2"/></svg></div>
  </div>
  <div class="tray">
    <svg class="umb" width="30" height="30" viewBox="0 0 30 30"><path d="M1 18Q2 8 13 7q10 1 12 11-6-3-12-1-6-2-12 1z" fill="#4aa7ee"/><path d="M7 18q0-8 6-11 6 3 6 11-3-2-6-1-3-1-6 1z" fill="#8ccbf8"/><path d="M12.500 17v9q-1 3-4 1" fill="none" stroke="#9a9a9a" stroke-width="2"/><path d="M16 1l-2 3M21 1l-2 4M27 5l-2 3M22 8l-1 2M28 12l-1 2" stroke="#63b8f5" stroke-width="1.800"/></svg>
    <span class="wx">Downpour tomorrow</span>
    <svg width="16" height="10" viewBox="0 0 16 10"><path d="M1 9l7-7 7 7"/></svg>
    <svg class="bat" width="20" height="15" viewBox="0 0 20 15"><path d="M7 3h11v10H5V8M19 6v4M1 1v3q3 3 5 0V1M3.500 5v5h2"/><path d="M7 5h4v6H7z" fill="#fff"/></svg>
    <svg class="wifi" width="17" height="16" viewBox="0 0 17 16"><path d="M1 14Q2 3 14 1M5 15q1-8 10-9M9 15q1-4 6-5"/><circle cx="14" cy="14" r="1.500" fill="#fff"/></svg>
    <svg class="spk" width="21" height="18" viewBox="0 0 21 18"><path d="M1 6h3l4-4v14l-4-4H1zM11 6q2 3 0 6"/><path d="M14 4q4 5 0 10M17 2q5 7 0 14" opacity=".5"/></svg>
    <span class="clock">8:10 PM</span>
    <svg width="21" height="20" viewBox="0 0 21 20"><path d="M0 0h20v17h-7l-3 3-3-3H0z" fill="#fff" stroke="none"/><path d="M4 5h12M4 9h12M4 13h8" stroke="#222"/></svg>
    <div class="edge"></div>
  </div>
</footer>
<script src="app.js"></script>
</body>
</html>
```

FILE: styles.css
```css
* { box-sizing: border-box; }
body { margin: 0; width: 1920px; height: 1080px; overflow: hidden; display: flex; flex-direction: column; font: 14px "Open Sans", "Noto Sans", sans-serif; color: #252423; background: #f3f2f1; }
p, h1 { margin: 0; }
.sprite { display: block; position: absolute; }
svg { flex: none; fill: none; }

/* icon paint */
.k { fill: none; stroke: #484644; stroke-width: 1.6; }
.k2 { fill: none; stroke: #201f1e; stroke-width: 1.6; }
.kw { fill: #fff; stroke: #484644; stroke-width: 1.6; }
.kf { fill: #3b3a39; }
.w { fill: #fff; stroke: #605e5c; stroke-width: 1.4; }
.g { fill: #c8c6c4; stroke: #797775; stroke-width: 1.4; }
.gf { fill: #c8c6c4; stroke: #797775; stroke-width: 1; }
.gl { fill: none; stroke: #797775; stroke-width: 1.4; }
.u { fill: #83beec; stroke: #0f66b0; stroke-width: 1.4; }
.uf { fill: #69afe5; }
.bl { stroke: #1976c0; stroke-width: 1.6; fill: none; }
.bl2 { stroke: #1565ad; stroke-width: 2.4; }
.o { fill: #ffd483; stroke: #d97706; stroke-width: 1.3; }
.t123 { font: 10.5px "Open Sans", sans-serif; fill: #1e8bcd; text-anchor: middle; }
.tbig { font: bold 19px "Open Sans", sans-serif; fill: #1e86c8; text-anchor: middle; }
.ta { font: 23px "Open Sans", sans-serif; fill: #1e8bcd; text-anchor: middle; }
.tfx { font: italic 25px "Liberation Serif", serif; fill: #484644; text-anchor: middle; }
.tdax { font: 9px "Open Sans", sans-serif; fill: #252423; text-anchor: middle; }

/* title bar */
.titlebar { height: 43px; flex: none; background: #3b3a39; color: #fff; display: flex; align-items: center; padding-left: 20px; }
.titlebar > * { flex: none; }
.qa { width: 20px; height: 20px; stroke: #fff; stroke-width: 1.3; }
.undo { width: 18px; margin-left: 19px; }
.redo { width: 18px; margin-left: 19px; opacity: .4; }
.wintitle { margin: 6px 0 0 12px; width: 184px; white-space: nowrap; font-size: 13.8px; letter-spacing: .25px; }
.topsearch { margin: -1px 0 0 436px; width: 500px; height: 30px; border-radius: 3px; background: #d5d4d2; color: #225b4f; font-size: 16.5px; display: flex; align-items: center; gap: 14px; padding-left: 20px; }
.topsearch svg { stroke: #3b3a39; stroke-width: 1.4; }
.signin { margin-left: 407px; width: 47px; font-size: 14px; white-space: nowrap; }
.avatar { width: 26px; height: 26px; margin: 0 -2px 0 11px; }
.win { stroke: #fff; stroke-width: 1.3; margin: 3px 0 0 41px; }

/* menu */
.menu { height: 44px; flex: none; background: #fafafa; display: flex; font-size: 16.5px; line-height: 40px; padding-left: 28px; color: #201f1e; white-space: nowrap; }
.m1 { width: 73px; } .m2 { width: 48px; height: 38px; margin-right: 39px; border-bottom: 3px solid #117865; font-weight: 700; letter-spacing: -.35px; }
.m3 { width: 83px; } .m4 { width: 114px; letter-spacing: .1px; } .m5 { width: 76px; } .m6 { width: 109px; } .m7 { width: 60px; }
.share { margin: 5px 0 0 1178px; width: 105px; height: 30px; border: 0; border-radius: 5px; background: #117865; color: #fff; font: 15.5px "Open Sans", sans-serif; letter-spacing: -.3px; display: flex; align-items: center; justify-content: center; gap: 5px; padding: 0; }
.share svg { stroke: #fff; stroke-width: 1.6; }
.share svg:first-child { margin-right: 4px; }

/* ribbon */
.ribbon { height: 113px; flex: none; background: #fafafa; display: flex; padding-top: 1px; box-shadow: 0 1px 5px rgba(0,0,0,.22); z-index: 2; }
.group { height: 110px; flex: none; border-right: 1px solid #d2d0ce; display: flex; flex-direction: column; }
.group footer { text-align: center; font-size: 12.4px; letter-spacing: -.15px; line-height: 17px; margin-top: auto; margin-bottom: -2px; }
.tools { display: flex; height: 92px; }
.tools.mid { justify-content: center; }
.g-clip { width: 201px; padding-left: 10px; } .g-data { width: 449px; padding-left: 3px; } .g-query { width: 145px; padding-left: 12px; } .g-insert { width: 510px; padding-left: 5px; } .g-calc { width: 233px; padding-left: 2px; } .g-sens { width: 92px; } .g-share { width: 74px; } .g-cop { width: 164px; }
.g-clip footer { padding-right: 11px; } .g-data footer { padding-right: 3px; } .g-query footer { padding-right: 12px; } .g-insert footer { padding-right: 5px; }
.rb { display: flex; flex-direction: column; align-items: center; white-space: nowrap; line-height: 20px; font-size: 14px; letter-spacing: -.1px; }
.rb > svg { width: 40px; height: 40px; margin: 5px 0 4px; }
.rb i, .gal-more i { display: inline-block; width: 5px; height: 5px; border: solid #3b3a39; border-width: 0 1.8px 1.8px 0; transform: rotate(45deg); margin: 0 0 2px 4px; }
.off { opacity: .33; }
.w-paste { width: 50px; } .w66 { width: 66px; } .w54 { width: 54px; } .w84 { width: 84px; } .w36 { width: 36px; } .w62 { width: 62px; } .w58 { width: 58px; } .w82 { width: 82px; } .w60 { width: 60px; } .w59 { width: 60px; } .w108 { width: 108px; } .w42 { width: 42px; } .w80 { width: 80px; } .w110 { width: 110px; } .w32 { width: 32px; }
.w-paste svg { margin-left: 5px; }
.small { margin-top: -1px; }
.small div { height: 30px; display: flex; align-items: center; gap: 5px; white-space: nowrap; }
.small svg { width: 20px; height: 20px; margin-left: 5px; }
.gallery { margin-top: 8px; width: 317px; height: 77px; border: 1px solid #797775; background: #fff; display: flex; }
.gal-grid { width: 296px; padding: 1px 0 0 1px; display: grid; grid-template-columns: repeat(9, 32.5px); grid-template-rows: 37px 37px; place-items: center; }
.gal-grid svg { width: 20px; height: 20px; }
.gal-more { flex: 1; border-left: 1px solid #797775; display: flex; align-items: center; justify-content: center; }
.gal-more i { margin: 0; }
.collapse { align-self: flex-end; margin: 0 0 6px 35px; stroke: #252423; stroke-width: 1.8; }

/* work area */
.work { height: 813px; flex: none; display: flex; border-bottom: 1px solid #d9d8d6; }
.leftrail { width: 51px; border-right: 1px solid #e1dfdd; }
.leftrail div { height: 50px; display: flex; align-items: center; justify-content: center; }
.leftrail svg { width: 21px; height: 21px; overflow: visible; }
.leftrail .on { border-left: 3px solid #117865; padding-right: 3px; height: 49px; }
.center { width: 1376px; display: flex; flex-direction: column; }
.stage { height: 768px; display: flex; background: #fff; }
.canvas { width: 1336px; border-right: 1px solid #a19f9d; overflow: hidden; display: flex; flex-direction: column; }
.cards { display: flex; gap: 97.5px; padding-left: 71px; }
.card { height: 460px; border: 10px solid #e68f96; border-radius: 30px; background: #f8dcdd; box-shadow: 9px 9px 12px rgba(0,0,0,.36); }
.card svg { display: block; width: 100%; height: 440px; }
.c1 { width: 558px; } .c2 { width: 545px; }
h1 { margin: 116px 0 0 76px; font-size: 24.5px; line-height: 33px; letter-spacing: .05px; }
.dots { margin: auto 0 15px 3px; height: 2px; background: repeating-linear-gradient(90deg, #605e5c 0 2px, transparent 2px 4px); }
.filters { width: 39px; display: flex; flex-direction: column; align-items: center; padding-top: 15px; }
.filters svg { stroke: #252423; stroke-width: 1.5; margin-bottom: 18px; }
.filters svg + svg { margin: 0 0 9px 6px; }
.filters b { writing-mode: vertical-rl; font-size: 17.5px; font-weight: 600; margin-left: 2px; letter-spacing: .2px; }
.pages { height: 44px; display: flex; }
.view { width: 30px; margin-left: 12px; display: flex; justify-content: center; padding-top: 8px; height: 38px; }
.view svg, .fit { stroke: #605e5c; stroke-width: 1.7; }
.view.sel { border-bottom: 3px solid #117865; }
.ph { margin-left: 25px; padding-top: 5px; }
.ar { width: 0; height: 0; border: 5px solid transparent; margin-top: 16px; }
.ar.l { border-right: 6px solid #c8c6c4; border-left: 0; margin-left: 20px; }
.ar.r { border-left: 6px solid #c8c6c4; border-right: 0; margin: 16px 8px 0 22px; }
.tab { width: 99.9px; background: #fff; border-left: 1px solid #c8c6c4; font-size: 13.6px; letter-spacing: -.3px; display: flex; justify-content: center; line-height: 44px; }
.tab.cur { font-weight: 700; border-bottom: 5px solid #117865; width: 100.5px; position: relative; letter-spacing: -.6px; }
.tab em { position: absolute; right: 6px; top: 0; line-height: 23px; font-size: 13px; font-style: normal; }
.add { width: 50px; background: #117865; stroke: #fff; stroke-width: 4; display: flex; justify-content: center; padding-top: 14px; }

/* panes */
.pane { border-left: 1px solid #e1dfdd; }
.build { width: 226px; padding-left: 10px; }
.data { width: 227px; }
.phead { display: flex; height: 49px; padding-top: 11px; }
.phead b { font-size: 18.2px; font-weight: 700; letter-spacing: -.2px; line-height: 28px; width: 159px; }
.data .phead { padding-left: 10px; }
.dd { font-size: 19px; line-height: 26px; letter-spacing: 1.6px; width: 30.500px; }
.phead svg { stroke: #484644; stroke-width: 1.3; margin-top: 5px; }
.lab { font-size: 14.3px; line-height: 18px; height: 23px; }
.vis { width: 206px; height: 268px; background: #fff; border: 1px solid #8a8886; border-radius: 2px; padding: 2px 0 0 4px; display: grid; grid-template-columns: repeat(6, 32.4px); grid-auto-rows: 32.5px; place-items: center; }
.vis svg { width: 23px; height: 23px; overflow: visible; }
.vis .dd { width: 22px; line-height: 20px; margin-top: -6px; }
.lab2 { margin-top: 10px; height: 24px; line-height: 20px; }
.well { width: 206px; height: 49px; border: 1px dashed #605e5c; padding: 5px; }
.well div { height: 37px; border: 1px solid #605e5c; border-radius: 2px; background: #fff; text-align: center; line-height: 36px; font-size: 14.2px; font-weight: 600; }
.fsearch { margin: 8px 0 11px 5px; width: 215px; height: 30px; background: #fff; border: 1px solid #d2d0ce; border-bottom-color: #605e5c; border-radius: 4px; display: flex; align-items: center; gap: 9px; padding-left: 15px; font-size: 16px; color: #605e5c; }
.fsearch span { padding-top: 3px; }
.fsearch svg { stroke: #605e5c; stroke-width: 1.3; }
.row { height: 30px; display: flex; align-items: center; font-size: 14.2px; white-space: nowrap; color: #323130; }
.row > svg { width: 18px; height: 18px; }
.head .chev { width: 15px; height: 9px; margin: 0 7px 0 16px; stroke: #605e5c; stroke-width: 1.2; }
.head span { margin-left: 5px; }
.box { width: 15px; height: 15px; border: 1px solid #797775; border-radius: 3px; margin: 0 9px 0 55px; background: #f9f8f7; }
.slot { width: 18px; height: 18px; margin-right: 6px; display: flex; }
.slot svg { width: 18px; height: 18px; }
.rightrail { width: 40px; background: #faf9f8; border-left: 1px solid #e1dfdd; display: flex; flex-direction: column; }
.rightrail div { height: 40px; display: flex; align-items: center; justify-content: center; }
.rightrail svg { width: 23px; height: 23px; overflow: visible; }
.rightrail .sel { background: #e1dfdd; border: 1px solid #605e5c; margin-left: -1px; }
.rightrail .gear { margin-top: auto; border-top: 1px solid #e1dfdd; }

/* status */
.status { height: 29px; flex: none; display: flex; align-items: center; padding: 1px 0 0 5px; font-size: 14px; color: #3b3a39; letter-spacing: -.1px; }
.status > * { flex: none; }
.pg { width: 1648px; letter-spacing: .15px; }
.minus, .plus { font-size: 18px; color: #484644; line-height: 20px; margin-top: -4px; }
.minus { width: 14px; padding-left: 2px; }
.plus { margin: -3px 15px 0 6px; width: 11px; font-size: 17px; }
.pct { width: 52px; color: #605e5c; }

/* taskbar */
.taskbar { height: 38px; flex: none; display: flex; color: #fff; background: linear-gradient(90deg, #222b2b 0, #35342e 25%, #352a25 38%, #2f2a2a 53%, #1c2230 62%, #1b202e 80%, #20302f 97%, #1b2430 100%); }
.taskbar > *, .tray > * { flex: none; }
.start { width: 45px; display: flex; align-items: center; justify-content: center; }
.tsearch { width: 323px; background: #f3f3f3; border: 1px solid #c8c8c8; color: #222; font-size: 17px; display: flex; align-items: center; gap: 13px; padding-left: 14px; }
.tsearch svg { stroke: #222; stroke-width: 1.5; }
.apps { display: flex; width: 877px; padding-left: -1px; }
.apps div { width: 46.1px; flex: none; display: flex; align-items: center; justify-content: center; }
.apps svg { width: 21px; height: 21px; }
.apps .run { background: linear-gradient(#76b9ed, #76b9ed) center bottom / 35px 3px no-repeat; }
.apps .act { background: linear-gradient(#76b9ed, #76b9ed) center bottom / 46px 3px no-repeat, #50535a; }
.tray { display: flex; align-items: center; padding-left: 187px; }
.tray svg { stroke: #fff; stroke-width: 1.3; }
.tray .umb { stroke: none; }
.wx { width: 201px; padding-left: 9px; font-size: 16.9px; letter-spacing: .05px; white-space: nowrap; }
.bat { margin-left: 12px; } .wifi { margin-left: 13px; } .spk { margin-left: 10px; }
.clock { margin-left: 17px; width: 79px; font-size: 14.2px; letter-spacing: -.1px; white-space: nowrap; }
.edge { width: 1px; height: 38px; background: #8a8a8a; margin-left: 25px; }

/* charts */
.ct { font: bold 31.5px "Liberation Serif", serif; fill: #d64550; }
.lg { font: 13.6px "Open Sans", sans-serif; fill: #605e5c; }
.lgb { font: bold 13.6px "Open Sans", sans-serif; fill: #605e5c; }
.ax { font: 12.3px "Open Sans", sans-serif; fill: #605e5c; }
.dl { font: bold 12.6px "Open Sans", sans-serif; fill: #605e5c; text-anchor: middle; }
.dw { fill: #fff; }
.at { font: 400 15px Roboto, sans-serif; fill: #252423; stroke: #252423; stroke-width: .2; text-anchor: middle; }
.grid { stroke: #c2b6b7; stroke-width: 1; stroke-dasharray: 1 4; }
.bar { stroke: #605e5c; stroke-width: 1.3; }
```

FILE: app.js
```js
const COLORS = ["#ab6fb3", "#a6d1fd", "#e96fba"];

function text(cls, x, y, s, len, extra = "") {
  const fit = len ? ` textLength="${len}" lengthAdjust="spacingAndGlyphs"` : "";
  return `<text class="${cls}" x="${x}" y="${y}"${fit} ${extra}>${s}</text>`;
}

// Both legends share the same spacing; x is the left edge of the legend title.
function legend(x) {
  let out = text("lgb", x, 71, "Gender", 47);
  [["Female", 61.5, 68.5, 44.5], ["Male", 124, 131.5, 30], ["Unspecified", 173.5, 181, 71]].forEach(([name, cx, tx, w], i) => {
    out += `<circle class="dot" cx="${x + cx}" cy="66" r="5.200" fill="${COLORS[i]}" stroke="#605e5c" stroke-width="1.800"/>` + text("lg", x + tx, 71, name, w);
  });
  return out;
}

function rect(x, y, w, h, i) {
  return `<rect class="bar" x="${x}" y="${y}" width="${w}" height="${h}" fill="${COLORS[i]}"/>`;
}

function drawBands() {
  const rows = [
    ["$100k+", 82, 110, 10], ["$70k–$80k", 56, 54, 7], ["$80k–$90k", 57, 48, 3],
    ["$40k–$50k", 55, 48, 2], ["$30k–$40k", 60, 41, 2], ["$60k–$70k", 40, 54, 5],
    ["$50k–$60k", 36, 53, 7], ["$90k–$100k", 44, 42, 4], ["$20k–$30k", 11, 15, 0]
  ];
  const hidden = ["1-1", "7-1", "8-1"];
  const base = 341.5, unit = 2.07;
  let out = text("ct", 103.5, 37.5, "Employee Salary Band", 353) + legend(15);
  [0, 50, 100].forEach(v => {
    const y = base - v * unit;
    out += `<path class="grid" d="M68 ${y}H524"/>` + text("ax", 59.5, y + 4.2, v, 0, 'text-anchor="end"');
  });
  let labels = "";
  rows.forEach((r, n) => {
    const gx = 88.5 + n * 47.35;
    for (let i = 0; i < 3; i++) {
      const v = r[i + 1];
      if (!v) continue;
      const h = v * unit, x = gx + i * 12.4;
      out += rect(x, base - h, 11.8, h, i);
      if (!hidden.includes(n + "-" + i)) labels += text("dl", x + 6, base - h - 10, v);
    }
    const lx = gx + 12.5, ly = base + 13;
    out += text("ax", lx, ly, r[0], 0, `text-anchor="end" transform="rotate(-35 ${lx} ${ly})"`);
  });
  out += labels + text("at", 296.5, 422, "Salary Band", 80);
  out += text("at", 0, 0, "Count of Name", 98, 'transform="translate(28.500 215.500) rotate(-90)"');
  document.getElementById("bands").innerHTML = out;
}

function drawRegions() {
  const rows = [["Kaduna", [118, 123, 9], 122], ["Abuja", [119, 106, 13], 204.5], ["Lagos", [78, 84, 4], 287]];
  const x0 = 93.2, unit = 1.512;
  let out = text("ct", 95, 37.5, "Salary Band by Region", 354) + legend(14.5);
  [0, 100, 200].forEach(v => {
    const x = x0 + v * unit;
    out += `<path class="grid" d="M${x} 92V387"/>` + text("ax", x, 401, v, 0, 'text-anchor="middle"');
  });
  rows.forEach(([name, vals, y]) => {
    let x = x0;
    out += text("ax", 83.5, y + 36, name, name === "Kaduna" ? 41.5 : 32, 'text-anchor="end"');
    vals.forEach((v, i) => {
      const w = v * unit;
      out += rect(x, y, w, 61.5, i);
      if (v > 4) out += text("dl dw", x + w / 2, y + 34.5, v);
      x += w;
    });
    out += text("dl", x + (vals[2] === 9 ? 17.5 : 19), y + 36.5, vals.reduce((a, b) => a + b));
  });
  out += text("at", 296.2, 422, "Employees Below Minimum Salary", 231);
  out += text("at", 0, 0, "Location", 57, 'transform="translate(28.500 237) rotate(-90)"');
  document.getElementById("regions").innerHTML = out;
}

function drawFields() {
  const tables = [
    ["Bonus Rules", [["Average"], ["Department"], ["Good"], ["Poor"], ["Very Good"], ["Very Poor"]]],
    ["PMR-G Employee Data", [
      ["Average Rating ...", "calc"], ["Bonus Amount", "colsum"], ["Bonus Percenta...", "colsum"], ["Column", "colsum"],
      ["Department"], ["Employees Belo...", "calc"], ["Gender"], ["Location"], ["Name"], ["Numeric Rating", "colsum"],
      ["Rating"], ["Rating Count b...", "calc"], ["Salary", "sum"], ["Salary Band", "fx"], ["Total Pay", "colsum"]
    ]]
  ];
  let out = "";
  tables.forEach(([name, fields]) => {
    out += `<div class="row head"><svg class="chev" viewBox="0 0 15 9"><path d="M1 1l6.500 6.500L14 1"/></svg><svg><use href="#f-table"/></svg><span>${name}</span></div>`;
    fields.forEach(([f, icon]) => {
      const svg = icon ? `<svg><use href="#f-${icon}"/></svg>` : "";
      out += `<div class="row"><div class="box"></div><div class="slot">${svg}</div>${f}</div>`;
    });
  });
  document.getElementById("fields").innerHTML = out;
}

drawBands();
drawRegions();
drawFields();
```
